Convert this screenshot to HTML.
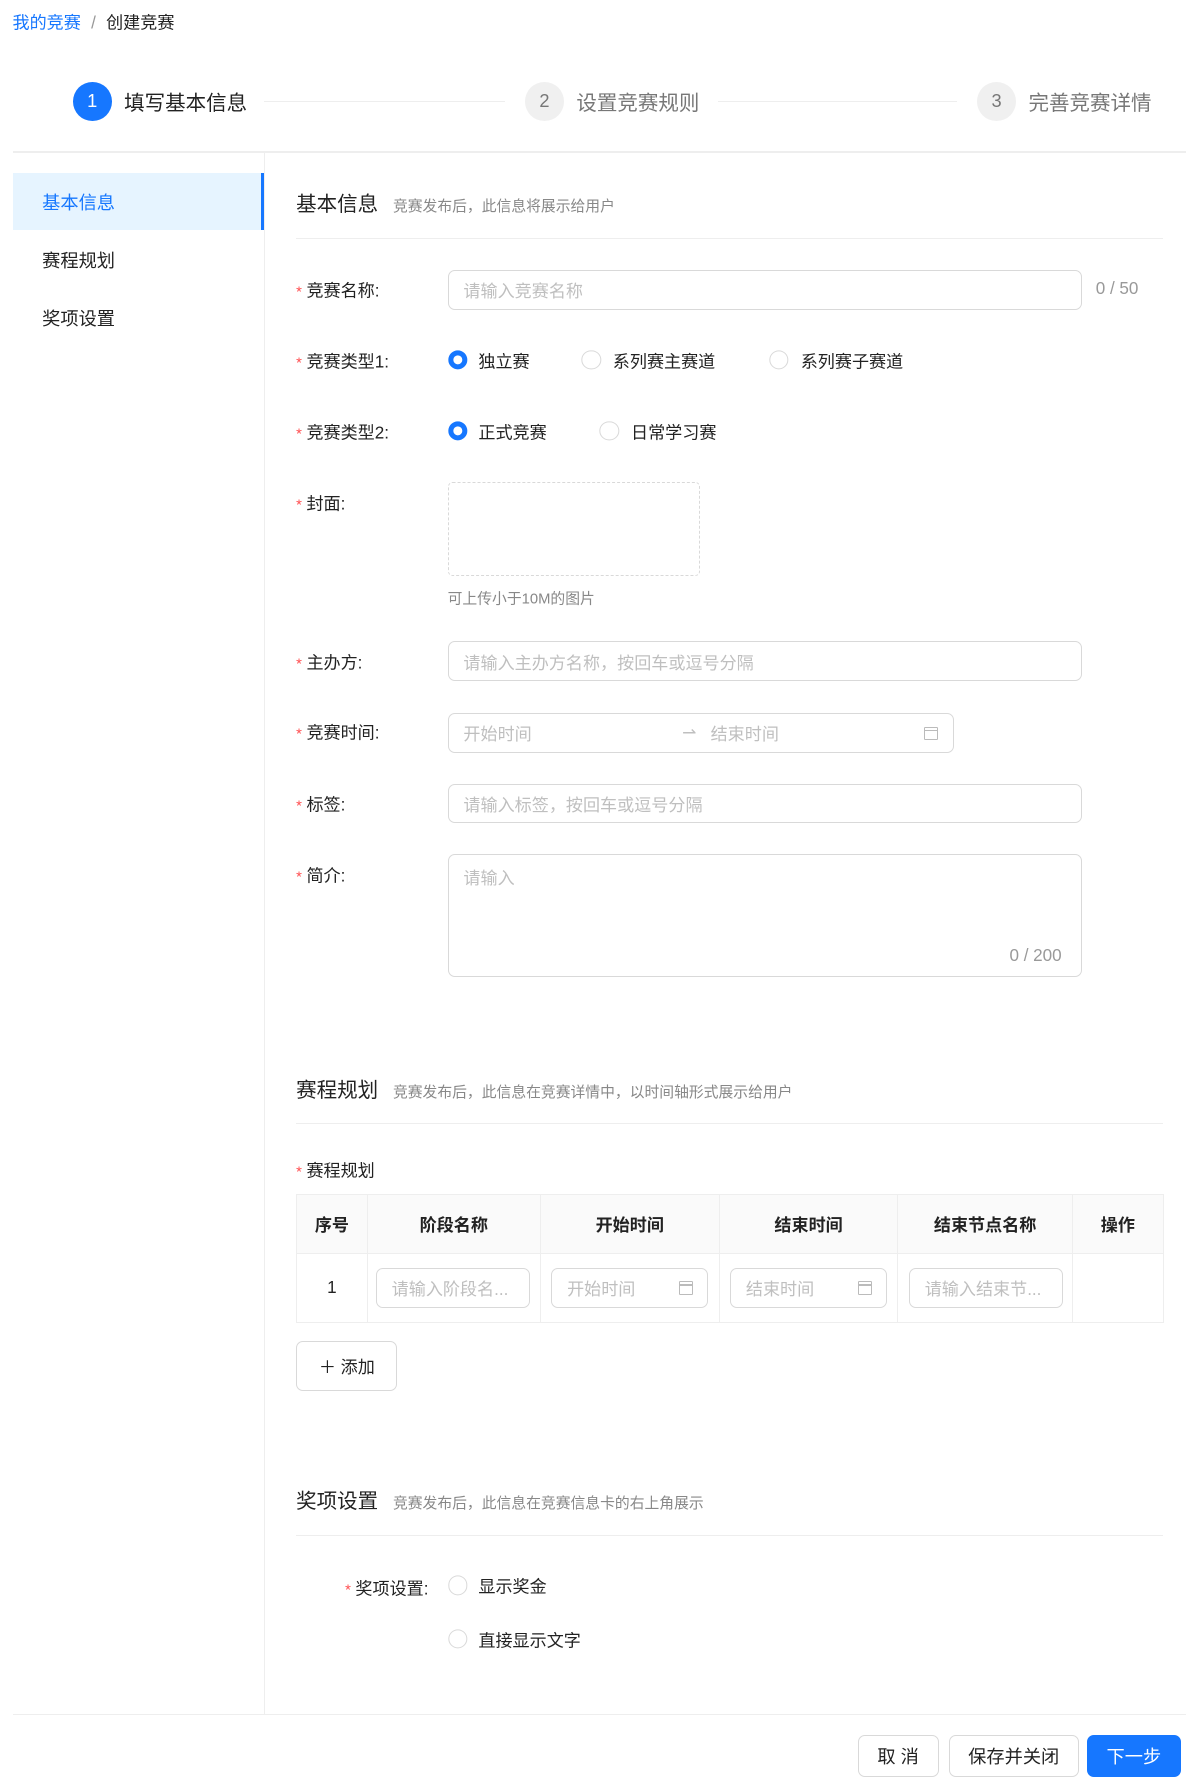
<!DOCTYPE html>
<html><head><meta charset="utf-8"><style>
*{box-sizing:border-box;margin:0;padding:0}
html,body{width:1187px;height:1787px;overflow:hidden;background:#fff}
#w{zoom:1.139;position:relative;width:1043px;height:1569px;font-family:"Liberation Sans","Noto Sans CJK SC",sans-serif;color:#222;font-size:15px}
.a{position:absolute;white-space:nowrap}
.c{transform:translateY(-50%)}
.hl{position:absolute;height:1px;background:#eee}
.circ{position:absolute;width:34px;height:34px;border-radius:50%;text-align:center;line-height:34px;font-size:16px}
.inp{position:absolute;border:1px solid #d9d9d9;border-radius:6px;color:#bfbfbf;font-size:15px;padding-left:13px;display:flex;align-items:center}
.lab{position:absolute;font-size:15px;transform:translateY(-50%)}
.lab i{color:#ff4d4f;font-style:normal;font-size:13px;margin-right:4px}
.rad{position:absolute;width:17px;height:17px;border-radius:50%;border:1px solid #d9d9d9;transform:translate(-50%,-50%);background:#fff}
.rad.on{border:5px solid #1677ff}
.sub{font-size:13px;color:#888}
.btn{position:absolute;border:1px solid #d9d9d9;border-radius:6px;font-size:16px;display:flex;align-items:center;justify-content:center;background:#fff}
.cal{position:absolute;width:13px;height:12px;border:1.3px solid #bbb;border-radius:1px}
.cal:before{content:"";position:absolute;left:0;right:0;top:2px;height:1px;background:#bbb}
td,th{border:1px solid #eee}
</style></head><body><div id="w">
<div class="a c" style="left:11px;top:18px;font-size:15px"><span style="color:#1677ff">我的竞赛</span><span style="color:#999;margin:0 9px">/</span>创建竞赛</div>

<div class="circ" style="left:64px;top:72px;background:#1677ff;color:#fff">1</div>
<div class="a c" style="left:109px;top:89px;font-size:18px;color:#222">填写基本信息</div>
<div class="hl" style="left:232px;width:211px;top:89px"></div>
<div class="circ" style="left:461px;top:72px;background:#f0f0f0;color:#777">2</div>
<div class="a c" style="left:506px;top:89px;font-size:18px;color:#777">设置竞赛规则</div>
<div class="hl" style="left:630px;width:210px;top:89px"></div>
<div class="circ" style="left:858px;top:72px;background:#f0f0f0;color:#777">3</div>
<div class="a c" style="left:903px;top:89px;font-size:18px;color:#777">完善竞赛详情</div>

<div class="hl" style="left:11px;width:1030px;top:133px"></div>
<div style="position:absolute;left:232px;top:133px;width:1px;height:1372px;background:#eee"></div>
<div style="position:absolute;left:11px;top:152px;width:221px;height:50px;background:#e6f4ff;border-right:3px solid #1677ff"></div>
<div class="a c" style="left:37px;top:177px;font-size:16px;color:#1677ff">基本信息</div>
<div class="a c" style="left:37px;top:228px;font-size:16px">赛程规划</div>
<div class="a c" style="left:37px;top:279px;font-size:16px">奖项设置</div>

<div class="a c" style="left:260px;top:177px;font-size:18px">基本信息 <span class="sub" style="margin-left:8px">竞赛发布后，此信息将展示给用户</span></div>
<div class="hl" style="left:260px;width:761px;top:209px"></div>

<div class="lab" style="left:260px;top:254px"><i>*</i>竞赛名称:</div>
<div class="inp" style="left:393px;top:237px;width:557px;height:35px">请输入竞赛名称</div>
<div class="a c" style="left:962px;top:254px;color:#999">0 / 50</div>

<div class="lab" style="left:260px;top:316px"><i>*</i>竞赛类型1:</div>
<div class="rad on" style="left:402px;top:316px"></div><div class="a c" style="left:420px;top:316px">独立赛</div>
<div class="rad" style="left:519px;top:316px"></div><div class="a c" style="left:538px;top:316px">系列赛主赛道</div>
<div class="rad" style="left:684px;top:316px"></div><div class="a c" style="left:703px;top:316px">系列赛子赛道</div>

<div class="lab" style="left:260px;top:378px"><i>*</i>竞赛类型2:</div>
<div class="rad on" style="left:402px;top:378px"></div><div class="a c" style="left:420px;top:378px">正式竞赛</div>
<div class="rad" style="left:535px;top:378px"></div><div class="a c" style="left:554px;top:378px">日常学习赛</div>

<div class="lab" style="left:260px;top:441px"><i>*</i>封面:</div>
<div style="position:absolute;left:393px;top:423px;width:222px;height:83px;border:1px dashed #d9d9d9;border-radius:4px"></div>
<div class="a c sub" style="left:393px;top:525px">可上传小于10M的图片</div>

<div class="lab" style="left:260px;top:580px"><i>*</i>主办方:</div>
<div class="inp" style="left:393px;top:563px;width:557px;height:35px">请输入主办方名称，按回车或逗号分隔</div>

<div class="lab" style="left:260px;top:642px"><i>*</i>竞赛时间:</div>
<div class="inp" style="left:393px;top:626px;width:445px;height:35px">开始时间<span style="position:absolute;left:205px">⇀</span><span style="position:absolute;left:230px">结束时间</span><span class="cal" style="left:417px;top:11px"></span></div>

<div class="lab" style="left:260px;top:705px"><i>*</i>标签:</div>
<div class="inp" style="left:393px;top:688px;width:557px;height:35px">请输入标签，按回车或逗号分隔</div>

<div class="lab" style="left:260px;top:767px"><i>*</i>简介:</div>
<div class="inp" style="left:393px;top:750px;width:557px;height:108px;align-items:flex-start;padding-top:8px">请输入<span style="position:absolute;right:17px;bottom:9px;color:#999">0 / 200</span></div>

<div class="a c" style="left:260px;top:955px;font-size:18px">赛程规划 <span class="sub" style="margin-left:8px">竞赛发布后，此信息在竞赛详情中，以时间轴形式展示给用户</span></div>
<div class="hl" style="left:260px;width:761px;top:986px"></div>
<div class="lab" style="left:260px;top:1026px"><i>*</i>赛程规划</div>

<table style="position:absolute;left:260px;top:1048px;width:762px;border-collapse:collapse;font-size:15px">
<tr style="height:52px;background:#fafafa"><th style="width:62px">序号</th><th style="width:152px">阶段名称</th><th style="width:157px">开始时间</th><th style="width:157px">结束时间</th><th style="width:153px">结束节点名称</th><th>操作</th></tr>
<tr style="height:61px;text-align:center"><td>1</td><td></td><td></td><td></td><td></td><td></td></tr>
</table>
<div class="inp" style="left:330px;top:1113px;width:135px;height:35px">请输入阶段名...</div>
<div class="inp" style="left:484px;top:1113px;width:138px;height:35px">开始时间<span class="cal" style="left:111px;top:11px"></span></div>
<div class="inp" style="left:641px;top:1113px;width:138px;height:35px">结束时间<span class="cal" style="left:111px;top:11px"></span></div>
<div class="inp" style="left:798px;top:1113px;width:135px;height:35px">请输入结束节...</div>
<div class="btn" style="left:260px;top:1177px;width:89px;height:44px;font-size:15px">＋ 添加</div>

<div class="a c" style="left:260px;top:1316px;font-size:18px">奖项设置 <span class="sub" style="margin-left:8px">竞赛发布后，此信息在竞赛信息卡的右上角展示</span></div>
<div class="hl" style="left:260px;width:761px;top:1348px"></div>
<div class="lab" style="left:303px;top:1393px"><i>*</i>奖项设置:</div>
<div class="rad" style="left:402px;top:1392px"></div><div class="a c" style="left:420px;top:1392px">显示奖金</div>
<div class="rad" style="left:402px;top:1439px"></div><div class="a c" style="left:420px;top:1439px">直接显示文字</div>

<div class="hl" style="left:11px;width:1030px;top:1505px"></div>
<div class="btn" style="left:753px;top:1523px;width:71px;height:37px">取 消</div>
<div class="btn" style="left:833px;top:1523px;width:114px;height:37px">保存并关闭</div>
<div class="btn" style="left:954px;top:1523px;width:83px;height:37px;background:#1677ff;border-color:#1677ff;color:#fff">下一步</div>
</div></body></html>
